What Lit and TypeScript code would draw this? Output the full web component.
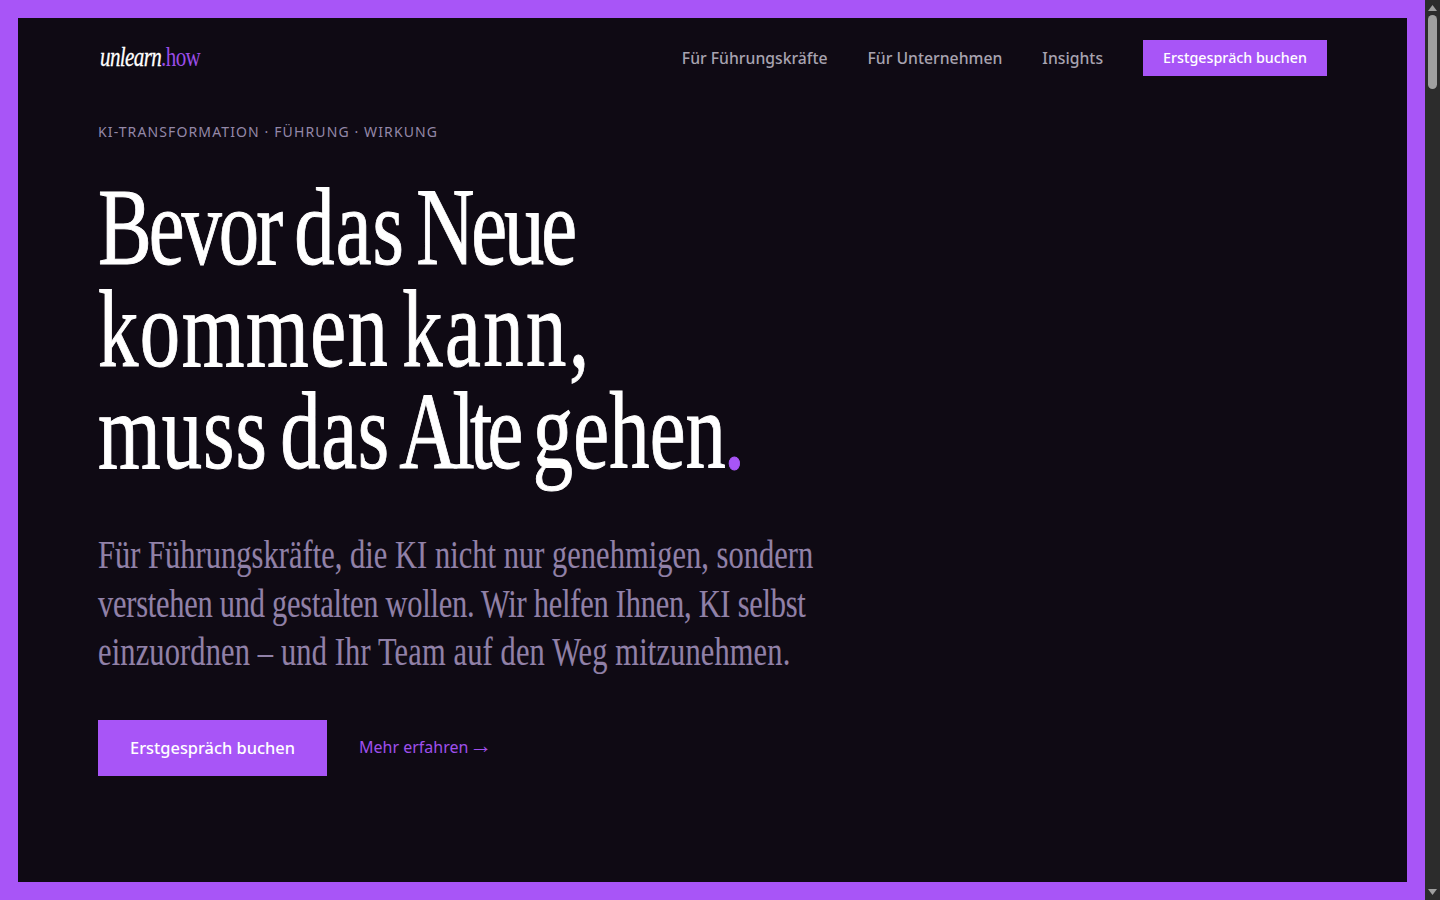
import { LitElement, html, css } from "lit";
import { customElement } from "lit/decorators.js";

const HEADLINE: { t: string; ls: number; ml?: number }[][] = [
  [{ t: "Bevor", ls: -4.1 }, { t: "das", ls: 1.5 }, { t: "Neue", ls: -4.2, ml: -4.4 }],
  [{ t: "kommen", ls: 2.1 }, { t: "kann,", ls: 3.4, ml: -2 }],
  [{ t: "muss", ls: 1.4 }, { t: "das", ls: 1, ml: -2.7 }, { t: "Alte", ls: -6.7, ml: -6.7 }, { t: "gehen", ls: 0.2 }],
];

@customElement("app-root")
export class AppRoot extends LitElement {
  static styles = css`
    :host { display: flex; width: 1440px; height: 900px; overflow: hidden; background: #a855f7; font-family: "Noto Sans", sans-serif; }
    * { box-sizing: border-box; margin: 0; }
    .page { flex: 1; padding: 18px; display: flex; }
    .frame { flex: 1; background: #0f0a14; padding: 22px 80px 0; display: flex; flex-direction: column; }
    nav { display: flex; align-items: center; justify-content: space-between; height: 36px; }
    .logo { font-family: "Liberation Serif", serif; font-size: 27px; line-height: 34px; letter-spacing: -0.03em; transform: scaleX(0.78); transform-origin: left center; white-space: nowrap; margin: 0 0 2px 2px; }
    .logo em { color: #fff; -webkit-text-stroke: 0.3px #fff; }
    .logo span { color: #9b4de8; }
    .links { display: flex; align-items: center; gap: 40px; }
    .links a { color: #a8a3b0; font-size: 15.75px; font-weight: 500; line-height: 22px; }
    .links a.cta { background: #a855f7; color: #fff; font-size: 14.3px; font-weight: 500; padding: 0 20px; height: 36px; line-height: 36px; }
    .eyebrow { margin-top: 46px; font-size: 14px; line-height: 20px; letter-spacing: 0.08em; color: #9488a8; text-transform: uppercase; }
    h1 { margin-top: 34px; font-family: "Liberation Serif", serif; font-weight: 400; font-size: 110px; line-height: 102px; word-spacing: -8px; color: #fff; -webkit-text-stroke: 1px #fff; transform: scaleX(0.733); transform-origin: left top; white-space: nowrap; }
    h1 .dot { display: inline-block; margin-left: -4px; color: #a855f7; -webkit-text-stroke: 1px #a855f7; transform: scaleX(1.1); transform-origin: left center; }
    .sub { margin-top: 49px; font-family: "Liberation Serif", serif; font-size: 39px; line-height: 48.5px; letter-spacing: 0.07px; color: #9181a8; -webkit-text-stroke: 0.15px #9181a8; transform: scaleX(0.78); transform-origin: left top; white-space: nowrap; }
    .l2 { letter-spacing: -0.3px; }
    .l3 { letter-spacing: 0.2px; }
    .actions { margin-top: 43px; display: flex; align-items: center; gap: 32px; }
    .primary { background: #a855f7; color: #fff; font-size: 16.4px; font-weight: 500; line-height: 56px; padding: 0 32px; }
    .secondary { color: #9f50ec; font-size: 16px; line-height: 22px; white-space: nowrap; margin-bottom: 2px; }
    .arrow { font-family: "Liberation Sans", sans-serif; font-size: 23px; line-height: 0; margin-left: -3.5px; }
    .bar { width: 15px; background: #2c2c2c; display: flex; flex-direction: column; align-items: center; padding: 5px 0; }
    .bar svg { display: block; }
    .thumb { width: 9px; height: 74px; margin-top: 4px; border-radius: 5px; background: #9f9f9f; }
    .fill { flex: 1; }
  `;

  render() {
    return html`
      <div class="page">
        <div class="frame">
          <nav>
            <div class="logo"><em>unlearn</em><span>.how</span></div>
            <div class="links">
              <a>Für Führungskräfte</a>
              <a>Für Unternehmen</a>
              <a>Insights</a>
              <a class="cta">Erstgespräch buchen</a>
            </div>
          </nav>
          <p class="eyebrow">KI-Transformation · Führung · Wirkung</p>
          <h1>
            ${HEADLINE.map(
              (line, i) => html`${line.map(
                (w, j) => html`${j ? " " : ""}<span style="letter-spacing:${w.ls}px;margin-left:${w.ml ?? 0}px">${w.t}</span>`
              )}${i === 2 ? html`<span class="dot">.</span>` : html`<br />`}`
            )}
          </h1>
          <p class="sub">Für Führungskräfte, die KI nicht nur genehmigen, sondern<br /><span class="l2">verstehen und gestalten wollen. Wir helfen Ihnen, KI selbst</span><br /><span class="l3">einzuordnen – und Ihr Team auf den Weg mitzunehmen.</span></p>
          <div class="actions">
            <a class="primary">Erstgespräch buchen</a>
            <a class="secondary">Mehr erfahren <span class="arrow">→</span></a>
          </div>
        </div>
      </div>
      <div class="bar">
        <svg width="9" height="6" viewBox="0 0 9 6"><path d="M4.5 0L9 6H0z" fill="#9f9f9f" /></svg>
        <div class="thumb"></div>
        <div class="fill"></div>
        <svg width="9" height="6" viewBox="0 0 9 6"><path d="M0 0h9L4.5 6z" fill="#9f9f9f" /></svg>
      </div>
    `;
  }
}
